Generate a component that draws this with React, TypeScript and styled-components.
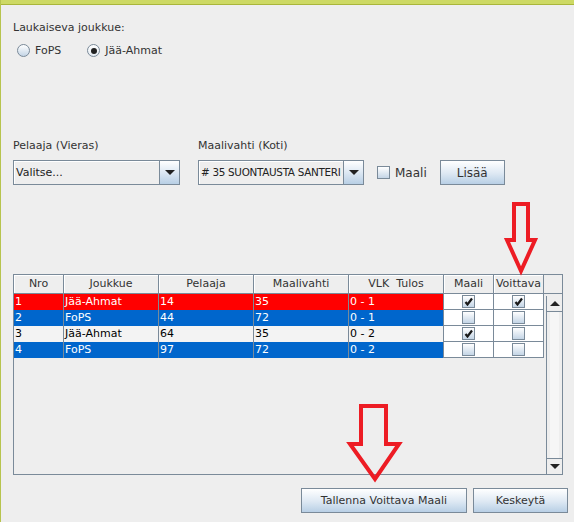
import { Fragment } from "react";
import styled, { createGlobalStyle } from "styled-components";

const GlobalStyle = createGlobalStyle`
  body {
    margin: 0;
    background: #eeeeee;
  }
`;

const Frame = styled.div`
  position: relative;
  width: 574px;
  height: 522px;
  box-sizing: border-box;
  background: #eeeeee;
  border-left: 1px solid #b7c44e;
  overflow: hidden;
  font: 11px "DejaVu Sans", Verdana, sans-serif;
  color: #333333;
`;

const TopBar = styled.div`
  height: 4px;
  background: #cdd964;
  border-bottom: 1px solid #a9b63a;
`;

const Content = styled.div`
  padding: 16px 0 0 12px;
`;

const Caption = styled.div`
  line-height: 14px;
  height: 14px;
  white-space: nowrap;
`;

const RadioRow = styled.div`
  display: flex;
  gap: 26px;
  margin-top: 9px;
  padding-left: 4px;
  height: 13px;
`;

const RadioItem = styled.label`
  display: flex;
  align-items: center;
  gap: 5px;
  line-height: 13px;
`;

const RadioCircle = styled.span<{ $checked?: boolean }>`
  position: relative;
  width: 13px;
  height: 13px;
  box-sizing: border-box;
  border-radius: 50%;
  border: 1px solid #7a8a99;
  background: ${(p) =>
    p.$checked
      ? "linear-gradient(#ffffff, #e4ebf2)"
      : "linear-gradient(#ffffff, #c4d5e6)"};
  &::after {
    content: "";
    display: ${(p) => (p.$checked ? "block" : "none")};
    position: absolute;
    left: 2.5px;
    top: 2.5px;
    width: 6px;
    height: 6px;
    border-radius: 50%;
    background: #222222;
  }
`;

const FieldsRow = styled.div`
  display: flex;
  align-items: flex-end;
  margin-top: 82px;
`;

const FieldGroup = styled.div<{ $width: number; $offset?: number }>`
  display: flex;
  flex-direction: column;
  gap: 7px;
  width: ${(p) => p.$width}px;
  margin-left: ${(p) => p.$offset ?? 0}px;
`;

const Combo = styled.div`
  display: flex;
  height: 25px;
  box-sizing: border-box;
  border: 1px solid #7a8a99;
`;

const ComboText = styled.div<{ $tight?: boolean }>`
  flex: 1;
  min-width: 0;
  padding-left: 2px;
  line-height: 23px;
  white-space: nowrap;
  overflow: hidden;
  background: #eeeeee;
  box-shadow: inset 1px 1px #ffffff;
  color: #222222;
  font-size: ${(p) => (p.$tight ? "10.4px" : "11px")};
  letter-spacing: ${(p) => (p.$tight ? "-0.3px" : "0")};
`;

const ComboArrow = styled.div`
  width: 19px;
  flex-shrink: 0;
  display: flex;
  align-items: center;
  justify-content: center;
  border-left: 1px solid #7a8a99;
  background: linear-gradient(#ffffff, #dde8f3 50%, #b8cfe5);
  &::before {
    content: "";
    border-left: 5px solid transparent;
    border-right: 5px solid transparent;
    border-top: 5px solid #222222;
  }
`;

const CheckLabel = styled.label`
  display: flex;
  align-items: center;
  gap: 5px;
  height: 25px;
  margin-left: 13px;
  font-size: 12px;
`;

const Box = styled.span`
  display: inline-flex;
  align-items: center;
  justify-content: center;
  width: 13px;
  height: 13px;
  box-sizing: border-box;
  border: 1px solid #7a8a99;
  background: linear-gradient(#ffffff, #c4d5e6);
`;

const Button = styled.button<{ $width: number }>`
  width: ${(p) => p.$width}px;
  height: 25px;
  padding: 0;
  border: 1px solid #7a8a99;
  background: linear-gradient(#ffffff, #dde8f3 55%, #b8cfe5);
  font: 11px "DejaVu Sans", Verdana, sans-serif;
  color: #333333;
`;

const AddButton = styled(Button)`
  margin-left: 13px;
  font-size: 12px;
`;

const ScrollPane = styled.div`
  margin-top: 89px;
  width: 550px;
  height: 201px;
  box-sizing: border-box;
  border: 1px solid #7a8a99;
  display: grid;
  grid-template-columns: 530px 18px;
  grid-template-rows: 19px 1fr;
`;

const cols = "50px 95px 95px 95px 95px 50px 50px";

const HeaderRow = styled.div`
  display: grid;
  grid-template-columns: ${cols};
`;

const HeaderCell = styled.div`
  box-sizing: border-box;
  border-right: 1px solid #7a8a99;
  border-bottom: 1px solid #7a8a99;
  background: #eeeeee;
  box-shadow: inset 1px 1px #ffffff;
  text-align: center;
  line-height: 18px;
  white-space: pre;
  overflow: hidden;
`;

const Corner = styled.div`
  border-bottom: 1px solid #7a8a99;
  background: #eeeeee;
`;

const Body = styled.div`
  display: grid;
  grid-template-columns: ${cols};
  grid-auto-rows: 16px;
  align-content: start;
`;

const Cell = styled.div<{ $bg: string; $fg: string }>`
  box-sizing: border-box;
  border-right: 1px solid #7a8a99;
  background: ${(p) => p.$bg};
  color: ${(p) => p.$fg};
  padding-left: 1px;
  line-height: 16px;
  white-space: nowrap;
  overflow: hidden;
`;

const BoolCell = styled.div`
  box-sizing: border-box;
  border-right: 1px solid #7a8a99;
  border-bottom: 1px solid #7a8a99;
  background: #ffffff;
  display: flex;
  align-items: center;
  justify-content: center;
`;

const ScrollBar = styled.div`
  margin: 2px 0 0 2px;
  border-left: 1px solid #7a8a99;
  display: flex;
  flex-direction: column;
  justify-content: space-between;
  background: linear-gradient(90deg, #eeeeee 3px, #f6f6f6 3px, #f6f6f6 12px, #eeeeee 12px);
`;

const ScrollButton = styled.div<{ $up?: boolean }>`
  height: 15px;
  display: flex;
  align-items: center;
  justify-content: center;
  background: #eeeeee;
  border-${(p) => (p.$up ? "bottom" : "top")}: 1px solid #7a8a99;
  &::before {
    content: "";
    border-left: 5px solid transparent;
    border-right: 5px solid transparent;
    ${(p) =>
      p.$up ? "border-bottom: 5px solid #222222;" : "border-top: 5px solid #222222;"}
  }
`;

const ButtonRow = styled.div`
  display: flex;
  justify-content: flex-end;
  gap: 6px;
  margin-top: 13px;
  padding-right: 6px;
`;

const Overlay = styled.svg`
  position: absolute;
  top: 0;
  left: -1px;
  pointer-events: none;
`;

const Check = () => (
  <svg width="9" height="9" viewBox="0 0 9 9">
    <path d="M1.5 5 L3.5 7.5 L8 1.5" fill="none" stroke="#1a1a1a" strokeWidth="2.2" />
  </svg>
);

type Row = {
  nro: string;
  team: string;
  player: string;
  keeper: string;
  score: string;
  goal: boolean;
  winner: boolean;
  bg: string;
  fg: string;
};

const rows: Row[] = [
  { nro: "1", team: "Jää-Ahmat", player: "14", keeper: "35", score: "0 - 1", goal: true, winner: true, bg: "#ff0000", fg: "#ffffff" },
  { nro: "2", team: "FoPS", player: "44", keeper: "72", score: "0 - 1", goal: false, winner: false, bg: "#0066cc", fg: "#ffffff" },
  { nro: "3", team: "Jää-Ahmat", player: "64", keeper: "35", score: "0 - 2", goal: true, winner: false, bg: "#f3f3f3", fg: "#000000" },
  { nro: "4", team: "FoPS", player: "97", keeper: "72", score: "0 - 2", goal: false, winner: false, bg: "#0066cc", fg: "#ffffff" },
];

const headers = ["Nro", "Joukkue", "Pelaaja", "Maalivahti", "VLK  Tulos", "Maali", "Voittava"];

export default function App() {
  return (
    <>
      <GlobalStyle />
      <Frame>
        <TopBar />
        <Content>
          <Caption>Laukaiseva joukkue:</Caption>
          <RadioRow>
            <RadioItem>
              <RadioCircle />
              FoPS
            </RadioItem>
            <RadioItem>
              <RadioCircle $checked />
              Jää-Ahmat
            </RadioItem>
          </RadioRow>

          <FieldsRow>
            <FieldGroup $width={167}>
              <Caption>Pelaaja (Vieras)</Caption>
              <Combo>
                <ComboText>Valitse...</ComboText>
                <ComboArrow />
              </Combo>
            </FieldGroup>
            <FieldGroup $width={166} $offset={18}>
              <Caption>Maalivahti (Koti)</Caption>
              <Combo>
                <ComboText $tight># 35 SUONTAUSTA SANTERI</ComboText>
                <ComboArrow />
              </Combo>
            </FieldGroup>
            <CheckLabel>
              <Box />
              Maali
            </CheckLabel>
            <AddButton $width={65}>Lisää</AddButton>
          </FieldsRow>

          <ScrollPane>
            <HeaderRow>
              {headers.map((h) => (
                <HeaderCell key={h}>{h}</HeaderCell>
              ))}
            </HeaderRow>
            <Corner />
            <Body>
              {rows.map((r) => (
                <Fragment key={r.nro}>
                  <Cell $bg={r.bg} $fg={r.fg}>{r.nro}</Cell>
                  <Cell $bg={r.bg} $fg={r.fg}>{r.team}</Cell>
                  <Cell $bg={r.bg} $fg={r.fg}>{r.player}</Cell>
                  <Cell $bg={r.bg} $fg={r.fg}>{r.keeper}</Cell>
                  <Cell $bg={r.bg} $fg={r.fg}>{r.score}</Cell>
                  <BoolCell>
                    <Box>{r.goal && <Check />}</Box>
                  </BoolCell>
                  <BoolCell>
                    <Box>{r.winner && <Check />}</Box>
                  </BoolCell>
                </Fragment>
              ))}
            </Body>
            <ScrollBar>
              <ScrollButton $up />
              <ScrollButton />
            </ScrollBar>
          </ScrollPane>

          <ButtonRow>
            <Button $width={166}>Tallenna Voittava Maali</Button>
            <Button $width={95}>Keskeytä</Button>
          </ButtonRow>
        </Content>

        <Overlay width="574" height="522" viewBox="0 0 574 522">
          <path
            d="M514 204 L528 204 L528 240 L535 240 L521 271 L507 240 L514 240 Z"
            fill="none"
            stroke="#ed1c24"
            strokeWidth="4"
            strokeLinejoin="miter"
          />
          <path
            d="M361 406 L386 406 L386 444 L399 444 L375 479 L350 444 L361 444 Z"
            fill="none"
            stroke="#ed1c24"
            strokeWidth="4"
            strokeLinejoin="miter"
          />
        </Overlay>
      </Frame>
    </>
  );
}
